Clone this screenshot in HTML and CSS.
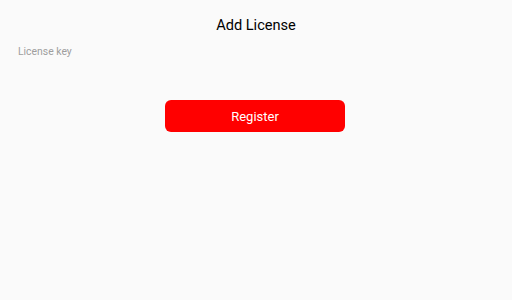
FILE: index.html
```html
<!DOCTYPE html>
<html>
<head>
<meta charset="utf-8">
<link rel="stylesheet" href="styles.css">
</head>
<body>
<div class="page">
  <h1 class="title">Add License</h1>
  <div class="field">License key</div>
  <div class="actions">
    <button class="btn">Register</button>
  </div>
</div>
</body>
</html>
```
FILE: styles.css
```css
html, body {
  margin: 0;
  padding: 0;
  background: #fafafa;
  font-family: Roboto, "Noto Sans", sans-serif;
}
.page {
  width: 512px;
  height: 300px;
  display: flex;
  flex-direction: column;
}
.title {
  margin: 15px 0 0 0;
  font-size: 14.6px;
  font-weight: 400;
  line-height: 20px;
  text-align: center;
  color: #000;
}
.field {
  margin: 10px 0 0 18px;
  font-size: 10.4px;
  line-height: 14px;
  color: #9e9e9e;
}
.actions {
  display: flex;
  justify-content: center;
  margin-top: 41px;
}
.btn {
  width: 180px;
  height: 32px;
  margin-left: -2px;
  border: none;
  border-radius: 6px;
  background: #ff0000;
  color: #fff;
  font-family: Roboto, "Noto Sans", sans-serif;
  font-size: 13px;
  padding: 0;
}
```
